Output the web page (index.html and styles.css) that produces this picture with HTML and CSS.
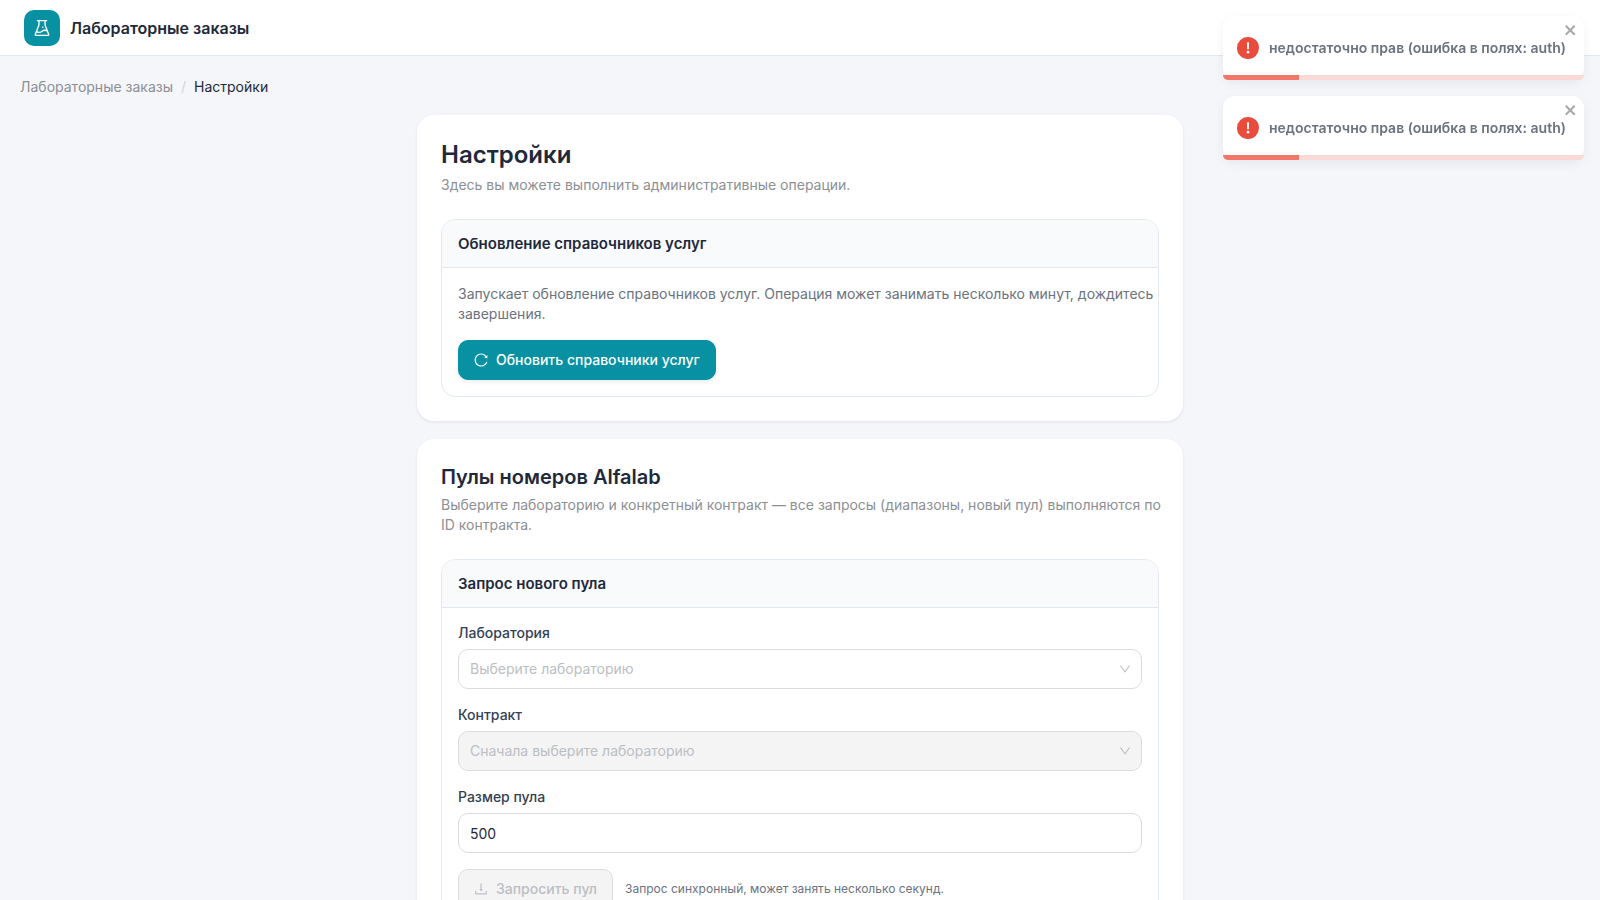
FILE: index.html
```html
<!DOCTYPE html>
<html lang="ru">
<head>
    <meta charset="UTF-8">
    <meta name="viewport" content="width=device-width, initial-scale=1.0">
    <title>Лабораторные заказы</title>
    <link rel="stylesheet" href="styles.css">
</head>
<body>
    <header class="header">
        <span class="logo">
            <svg viewBox="64 64 896 896" width="18" height="18" fill="currentColor" aria-hidden="true"><path d="M512 472a40 40 0 1080 0 40 40 0 10-80 0zm367 352.9L696.3 352V178H768v-68H256v68h71.7v174L145 824.9c-2.8 7.4-4.3 15.2-4.3 23.1 0 35.3 28.7 64 64 64h614.6c7.9 0 15.7-1.5 23.1-4.3 33-12.7 49.4-49.8 36.6-82.8zM395.7 364.7V180h232.6v184.7L719.2 600c-20.7-5.3-42.1-8-63.9-8-61.2 0-119.2 21.5-165.3 60a188.78 188.78 0 01-121.3 43.9c-32.7 0-64.1-8.3-91.8-23.7l118.8-307.5zM210.5 844l41.7-107.8c35.7 18.1 75.4 27.8 116.6 27.8 61.2 0 119.2-21.5 165.3-60 33.9-28.2 76.3-43.9 121.3-43.9 35 0 68.4 9.5 97.6 27.1L813.5 844h-603z"/></svg>
        </span>
        <span class="brand">Лабораторные заказы</span>
    </header>

    <nav class="breadcrumb">
        <a href="#">Лабораторные заказы</a>
        <span class="separator">/</span>
        <span class="current">Настройки</span>
    </nav>

    <main class="content">
        <section class="card">
            <h1>Настройки</h1>
            <p class="subtitle">Здесь вы можете выполнить административные операции.</p>
            <div class="panel">
                <h3 class="panel-head">Обновление справочников услуг</h3>
                <div class="panel-body">
                    <p class="description">Запускает обновление справочников услуг. Операция может занимать несколько минут, дождитесь <br>завершения.</p>
                    <button type="button" class="btn btn-primary">
                        <svg viewBox="64 64 896 896" width="14" height="14" fill="currentColor" aria-hidden="true"><path d="M909.1 209.3l-56.4 44.1C775.8 155.1 656.2 92 521.9 92 290 92 102.3 279.5 102 511.5 101.7 743.7 289.8 932 521.9 932c181.3 0 335.8-115 394.6-276.1 1.5-4.2-.7-8.9-4.9-10.3l-56.7-19.5a8 8 0 00-10.1 4.8c-1.8 5-3.8 10-5.9 14.9-17.3 41-42.1 77.8-73.7 109.4A344.77 344.77 0 01655.9 829c-42.3 17.9-87.4 27-133.8 27-46.5 0-91.5-9.1-133.8-27A341.5 341.5 0 01279 755.2a342.16 342.16 0 01-73.7-109.4c-17.9-42.4-27-87.4-27-133.9s9.1-91.5 27-133.9c17.3-41 42.1-77.8 73.7-109.4 31.6-31.6 68.4-56.4 109.3-73.8 42.3-17.9 87.4-27 133.8-27 46.5 0 91.5 9.1 133.8 27a341.5 341.5 0 01109.3 73.8c9.9 9.9 19.2 20.4 27.8 31.4l-60.2 47a8 8 0 003 14.1l175.6 43c5 1.2 9.9-2.6 9.9-7.7l.8-180.9c-.1-6.6-7.8-10.3-13-6.2z"/></svg>
                        Обновить справочники услуг
                    </button>
                </div>
            </div>
        </section>

        <section class="card">
            <h2>Пулы номеров Alfalab</h2>
            <p class="subtitle">Выберите лабораторию и конкретный контракт — все запросы (диапазоны, новый пул) выполняются по <br>ID контракта.</p>
            <div class="panel">
                <h3 class="panel-head">Запрос нового пула</h3>
                <form class="panel-body">
                    <div class="fields">
                        <div class="field">
                            <label for="lab">Лаборатория</label>
                            <div class="select">
                                <select id="lab">
                                    <option value="">Выберите лабораторию</option>
                                </select>
                                <svg viewBox="64 64 896 896" width="12" height="12" fill="currentColor" aria-hidden="true"><path d="M884 256h-75c-5.1 0-9.9 2.5-12.9 6.6L512 654.2 227.9 262.6c-3-4.1-7.8-6.6-12.9-6.6h-75c-6.5 0-10.3 7.4-6.5 12.7l352.6 486.1c12.8 17.6 39 17.6 51.7 0l352.6-486.1c3.9-5.3.1-12.7-6.4-12.7z"/></svg>
                            </div>
                        </div>
                        <div class="field">
                            <label for="contract">Контракт</label>
                            <div class="select">
                                <select id="contract" disabled>
                                    <option value="">Сначала выберите лабораторию</option>
                                </select>
                                <svg viewBox="64 64 896 896" width="12" height="12" fill="currentColor" aria-hidden="true"><path d="M884 256h-75c-5.1 0-9.9 2.5-12.9 6.6L512 654.2 227.9 262.6c-3-4.1-7.8-6.6-12.9-6.6h-75c-6.5 0-10.3 7.4-6.5 12.7l352.6 486.1c12.8 17.6 39 17.6 51.7 0l352.6-486.1c3.9-5.3.1-12.7-6.4-12.7z"/></svg>
                            </div>
                        </div>
                        <div class="field">
                            <label for="size">Размер пула</label>
                            <input id="size" type="text" inputmode="numeric" value="500">
                        </div>
                    </div>
                    <div class="actions">
                        <button type="submit" class="btn" disabled>
                            <svg viewBox="64 64 896 896" width="14" height="14" fill="currentColor" aria-hidden="true"><path d="M505.7 661a8 8 0 0012.6 0l112-141.7c4.1-5.2.4-12.9-6.3-12.9h-74.1V168c0-4.4-3.6-8-8-8h-60c-4.4 0-8 3.6-8 8v338.3H400c-6.7 0-10.4 7.7-6.3 12.9l112 141.8zM878 626h-60c-4.4 0-8 3.6-8 8v154H214V634c0-4.4-3.6-8-8-8h-60c-4.4 0-8 3.6-8 8v198c0 17.7 14.3 32 32 32h684c17.7 0 32-14.3 32-32V634c0-4.4-3.6-8-8-8z"/></svg>
                            Запросить пул
                        </button>
                        <span class="hint">Запрос синхронный, может занять несколько секунд.</span>
                    </div>
                </form>
            </div>
        </section>
    </main>

    <div class="toasts">
        <div class="toast" role="alert">
            <svg class="toast-icon" viewBox="0 0 24 24" width="22" height="22" fill="currentColor" aria-hidden="true"><path d="M11.983 0a12.206 12.206 0 00-8.51 3.653A11.8 11.8 0 000 12.207 11.779 11.779 0 0011.8 24h.214A12.111 12.111 0 0024 11.791 11.766 11.766 0 0011.983 0zM10.5 16.542a1.476 1.476 0 011.449-1.53h.027a1.527 1.527 0 011.523 1.47 1.475 1.475 0 01-1.449 1.53h-.027a1.529 1.529 0 01-1.523-1.47zM11 12.5v-6a1 1 0 012 0v6a1 1 0 11-2 0z"/></svg>
            <span>недостаточно прав (ошибка в полях: auth)</span>
            <button type="button" class="toast-close" aria-label="Закрыть">
                <svg viewBox="0 0 14 16" width="14" height="16" fill="currentColor" aria-hidden="true"><path fill-rule="evenodd" d="M7.71 8.23l3.75 3.75-1.48 1.48-3.75-3.75-3.75 3.75L1 11.98l3.75-3.75L1 4.48 2.48 3l3.75 3.75L9.98 3l1.48 1.48-3.75 3.75z"/></svg>
            </button>
            <div class="progress"><div class="progress-bar" style="width: 21%"></div></div>
        </div>
        <div class="toast" role="alert">
            <svg class="toast-icon" viewBox="0 0 24 24" width="22" height="22" fill="currentColor" aria-hidden="true"><path d="M11.983 0a12.206 12.206 0 00-8.51 3.653A11.8 11.8 0 000 12.207 11.779 11.779 0 0011.8 24h.214A12.111 12.111 0 0024 11.791 11.766 11.766 0 0011.983 0zM10.5 16.542a1.476 1.476 0 011.449-1.53h.027a1.527 1.527 0 011.523 1.47 1.475 1.475 0 01-1.449 1.53h-.027a1.529 1.529 0 01-1.523-1.47zM11 12.5v-6a1 1 0 012 0v6a1 1 0 11-2 0z"/></svg>
            <span>недостаточно прав (ошибка в полях: auth)</span>
            <button type="button" class="toast-close" aria-label="Закрыть">
                <svg viewBox="0 0 14 16" width="14" height="16" fill="currentColor" aria-hidden="true"><path fill-rule="evenodd" d="M7.71 8.23l3.75 3.75-1.48 1.48-3.75-3.75-3.75 3.75L1 11.98l3.75-3.75L1 4.48 2.48 3l3.75 3.75L9.98 3l1.48 1.48-3.75 3.75z"/></svg>
            </button>
            <div class="progress"><div class="progress-bar" style="width: 21%"></div></div>
        </div>
    </div>
</body>
</html>
```
FILE: styles.css
```css
* {
    box-sizing: border-box;
}

body {
    margin: 0;
    background-color: #f4f6fa;
    color: #1e293b;
    font-family: Inter, sans-serif;
    font-size: 14px;
    line-height: 20px;
}

h1, h2, h3, p {
    margin: 0;
}

svg {
    display: block;
    flex-shrink: 0;
}

/* Header */
.header {
    display: flex;
    align-items: center;
    gap: 10px;
    height: 56px;
    padding: 0 24px;
    background-color: #fff;
    border-bottom: 1px solid #e2e8f0;
}

.logo {
    display: flex;
    align-items: center;
    justify-content: center;
    width: 36px;
    height: 36px;
    border-radius: 10px;
    background-color: #0891a2;
    color: #fff;
}

.brand {
    font-size: 16px;
    font-weight: 600;
}

.breadcrumb {
    display: flex;
    gap: 8px;
    padding: 21px 20px 17px;
}

.breadcrumb a {
    color: #8c8f94;
    text-decoration: none;
}

.separator {
    color: #d0d3d8;
}

/* Cards */
.content {
    display: flex;
    flex-direction: column;
    gap: 16px;
    max-width: 768px;
    margin: 0 auto;
    padding-bottom: 24px;
}

.card {
    padding: 24px;
    background-color: #fff;
    background-clip: padding-box;
    border: 1px solid transparent;
    border-radius: 18px;
    box-shadow: 0 1px 2px rgba(15, 23, 42, 0.05);
}

h1 {
    font-size: 24px;
    line-height: 32px;
    font-weight: 600;
}

h2 {
    font-size: 20px;
    line-height: 28px;
    font-weight: 600;
}

.subtitle {
    margin: 4px 0 24px;
    color: #8c8f94;
}

.panel {
    border: 1px solid #e2e8f0;
    border-radius: 14px;
    overflow: hidden;
}

.panel-head {
    height: 48px;
    padding: 12px 16px;
    background-color: #f9fafc;
    border-bottom: 1px solid #e2e8f0;
    font-size: 15px;
    line-height: 24px;
    font-weight: 600;
}

.panel-body {
    display: flex;
    flex-direction: column;
    align-items: flex-start;
    gap: 16px;
    padding: 16px;
}

.description {
    color: #6b7280;
}

/* Form */
.fields {
    display: grid;
    gap: 17px;
    width: 100%;
}

.field {
    display: grid;
    gap: 7px;
}

label {
    line-height: 18px;
    font-weight: 500;
    color: #334155;
}

.select {
    position: relative;
}

.select svg {
    position: absolute;
    top: 14px;
    right: 11px;
    color: #b8bcc2;
    pointer-events: none;
}

select,
input {
    display: block;
    width: 100%;
    height: 40px;
    padding: 0 11px;
    border: 1px solid #d9dce1;
    border-radius: 10px;
    background-color: #fff;
    color: #1e293b;
    font: inherit;
    appearance: none;
}

select,
select:disabled {
    color: #bbbec3;
    opacity: 1;
}

select:disabled {
    background-color: #f4f4f4;
}

.btn {
    display: flex;
    align-items: center;
    gap: 8px;
    height: 40px;
    padding: 0 15px;
    border: 1px solid #d9dce1;
    border-radius: 10px;
    font: inherit;
    font-weight: 500;
    cursor: pointer;
}

.btn:disabled {
    background-color: #f4f4f4;
    color: #bbbec3;
    cursor: not-allowed;
}

.btn-primary {
    border-color: #0891a2;
    background-color: #0891a2;
    color: #fff;
    box-shadow: 0 2px 4px rgba(15, 23, 42, 0.08);
}

.actions {
    display: flex;
    align-items: center;
    gap: 12px;
}

.hint {
    font-size: 12px;
    color: #6b7280;
}

/* Notifications */
.toasts {
    position: fixed;
    top: 16px;
    right: 16px;
    display: grid;
    gap: 16px;
}

.toast {
    position: relative;
    display: flex;
    align-items: center;
    gap: 10px;
    min-width: 361px;
    height: 64px;
    padding: 14px;
    background-color: #fff;
    border-radius: 12px;
    box-shadow: 0 4px 12px rgba(15, 23, 42, 0.06);
    color: #6b7280;
    font-weight: 600;
}

.toast-icon {
    color: #e74c3c;
}

.toast-close {
    position: absolute;
    top: 6px;
    right: 6px;
    padding: 0;
    border: none;
    background: none;
    color: #a6a8ac;
    cursor: pointer;
}

.progress {
    position: absolute;
    left: 0;
    right: 0;
    bottom: 0;
    height: 5px;
    background-color: #f9dad7;
    border-radius: 0 0 6px 6px;
    overflow: hidden;
}

.progress-bar {
    height: 5px;
    background-color: #ef786b;
}

/* Lines break only at <br> when the card has its full width */
@media (min-width: 800px) {
    .subtitle,
    .description {
        white-space: nowrap;
    }
}

@media (max-width: 799px) {
    p br {
        display: none;
    }
}
```
